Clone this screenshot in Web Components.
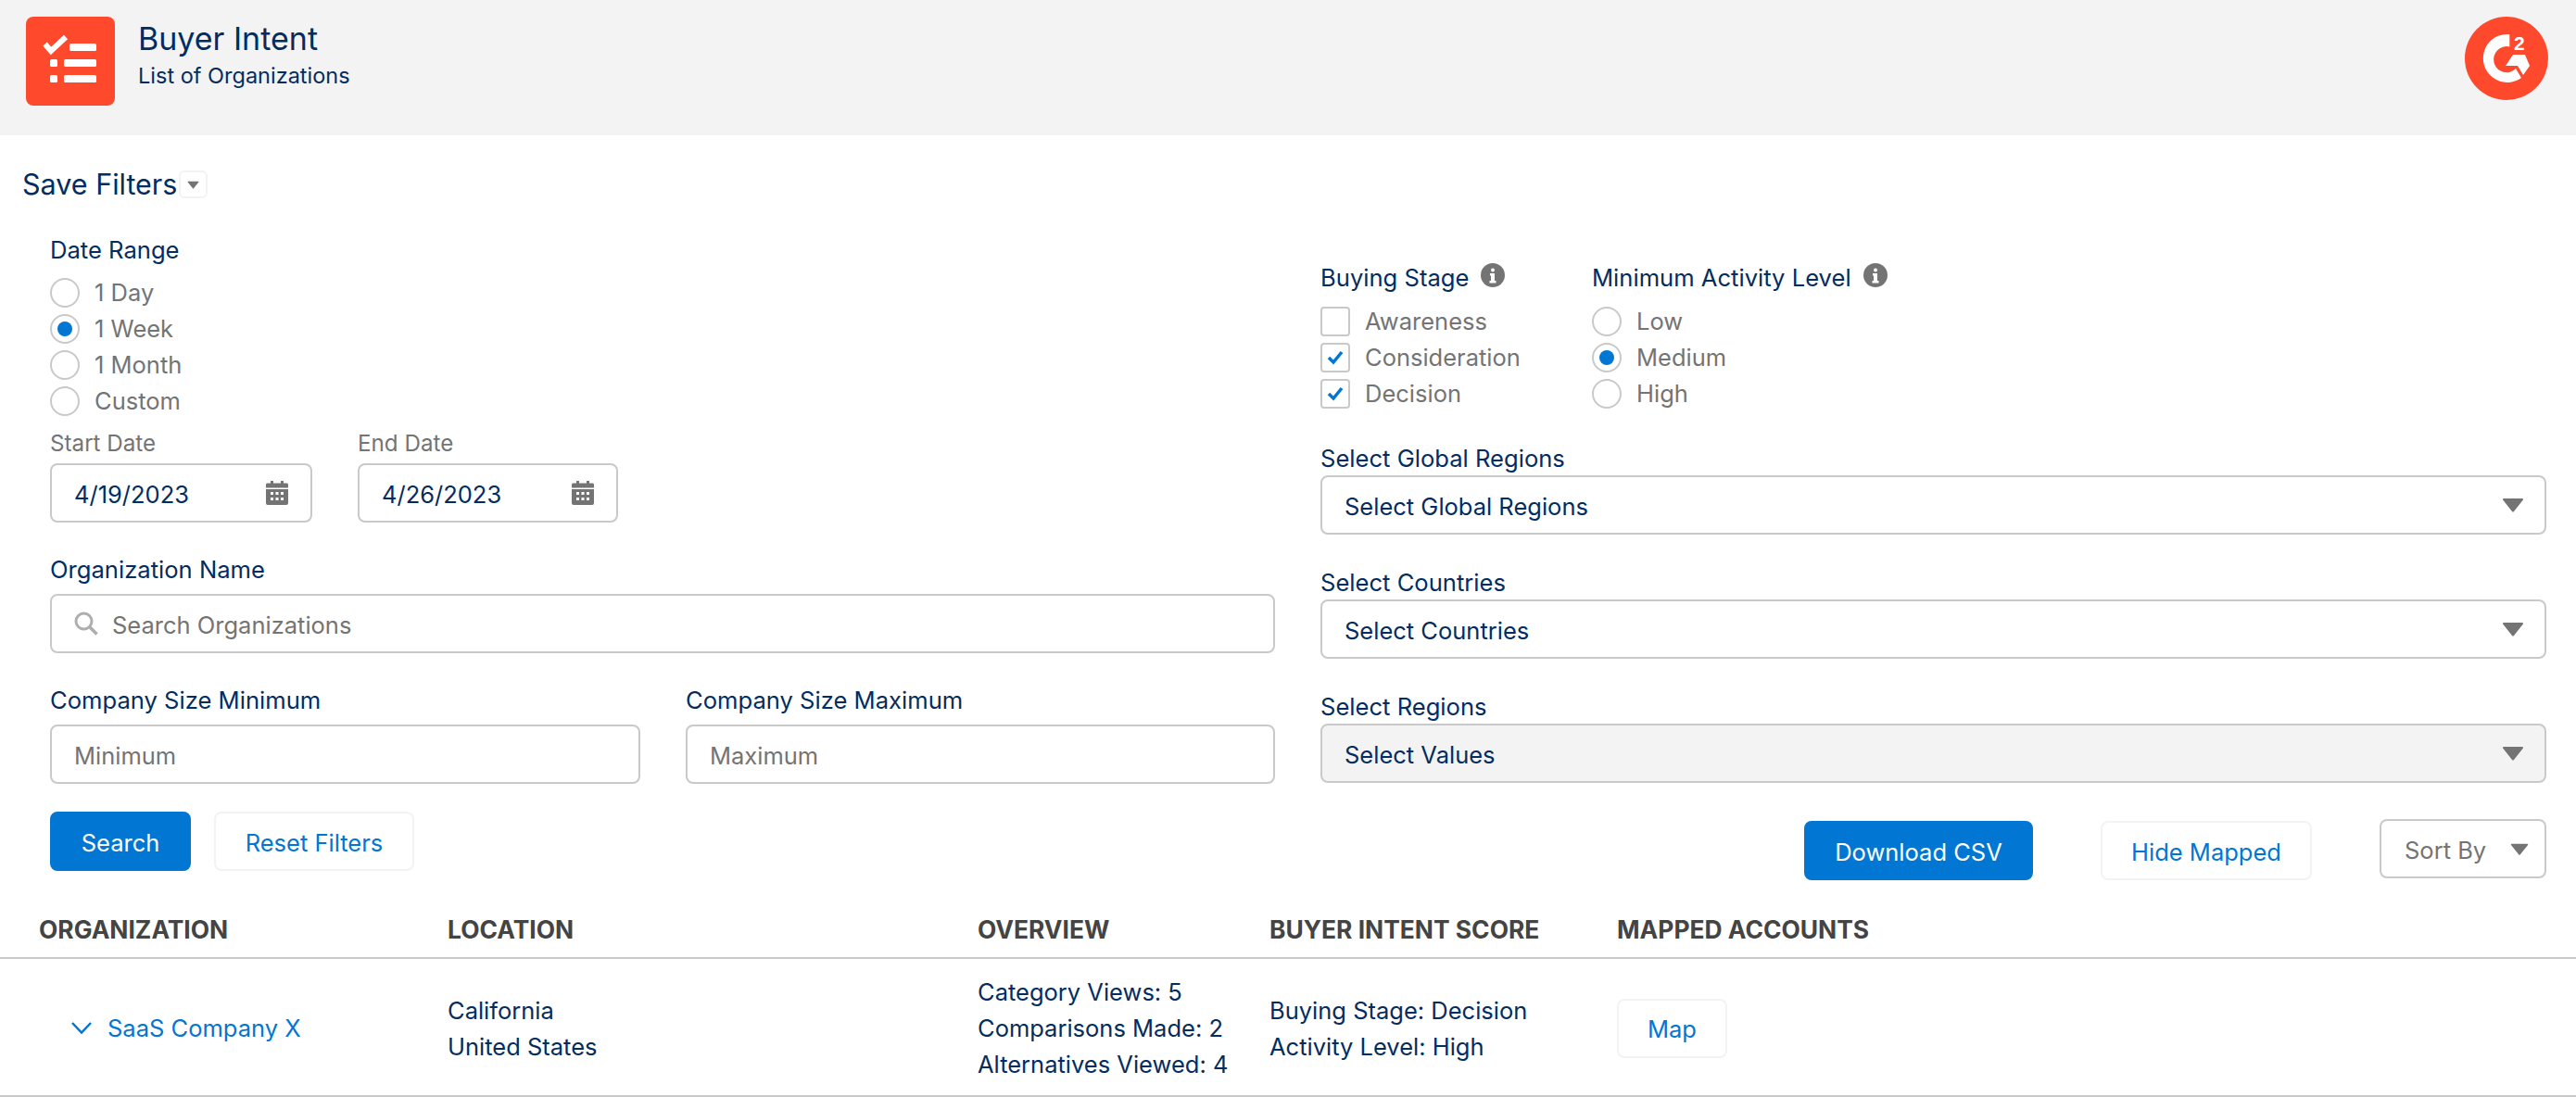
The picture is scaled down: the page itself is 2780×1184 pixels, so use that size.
<!DOCTYPE html>
<html lang="en">
<head>
<meta charset="utf-8">
<title>Buyer Intent</title>
<style>
  html, body { margin: 0; padding: 0; background: #fff; }
  body { font-family: Inter, "Liberation Sans", sans-serif; font-size: 25.5px; color: #032d60; }
</style>
</head>
<body>
<buyer-intent-page></buyer-intent-page>

<script>
const NAVY = "#032d60";
const GREY = "#747474";
const BLUE = "#0176d3";
const LINE = "#c9c9c9";

const ICONS = {
  list: `<svg width="96" height="96" viewBox="0 0 96 96"><rect width="96" height="96" rx="8" fill="#ff492c"/><polyline points="20.5,29.5 27,37 43,22" fill="none" stroke="#fff" stroke-width="6"/><g fill="#fff"><rect x="47" y="29" width="29" height="8" rx="1.5"/><rect x="41" y="46" width="35" height="8" rx="1.5"/><rect x="41" y="63" width="35" height="8" rx="1.5"/><rect x="26" y="46" width="8" height="8" rx="1.5"/><rect x="26" y="63" width="8" height="8" rx="1.5"/></g></svg>`,
  g2: `<svg width="90" height="90" viewBox="0 0 90 90"><circle cx="45" cy="45" r="45" fill="#ff492c"/><g fill="#fff"><path d="M48.3 19 A26 26 0 1 0 61 66 L55 56 A14 14 0 1 1 48.3 32.5 Z"/><polygon points="44,53 52,41 65,41 70,53 63,63 57,53"/><text x="53" y="36" font-family="Liberation Sans, sans-serif" font-weight="700" font-size="21">2</text></g></svg>`,
  calendar: `<svg width="24" height="26" viewBox="0 0 24 26"><g fill="#747474"><rect x="5" y="0" width="3" height="4"/><rect x="16" y="0" width="3" height="4"/><path d="M1.5 2.5h21a1.5 1.5 0 0 1 1.5 1.5v3.5H0V4a1.5 1.5 0 0 1 1.5-1.5z"/><path fill-rule="evenodd" d="M0 9h24v15a2 2 0 0 1-2 2H2a2 2 0 0 1-2-2zM5 12v3h3v-3zM10.500 12v3h3v-3zM16 12v3h3v-3zM5 18v3h3v-3zM10.500 18v3h3v-3zM16 18v3h3v-3z"/></g></svg>`,
  search: `<svg width="26" height="26" viewBox="0 0 26 26" fill="none" stroke="#aeaeae" stroke-width="3"><circle cx="10.500" cy="10.500" r="8.500"/><path d="M17 17 L24.500 24.500" stroke-width="3.500"/></svg>`,
  info: `<svg width="26" height="26" viewBox="0 0 26 26"><circle cx="13" cy="13" r="13" fill="#747474"/><g fill="#fff"><circle cx="13" cy="7.500" r="2"/><path d="M10 11h5v8h1.500v2.500h-7V19H11v-5.500h-1z"/></g></svg>`,
  check: `<svg width="18" height="16" viewBox="0 0 18 16" fill="none" stroke="#0176d3" stroke-width="3.500"><polyline points="2,8 7,13 16,2"/></svg>`,
  chevron: `<svg width="22" height="13" viewBox="0 0 22 13" fill="none" stroke="#0176d3" stroke-width="2.500"><polyline points="1,1 11,11.500 21,1"/></svg>`,
};

function caret(w, h) {
  return `<svg width="${w}" height="${h}" viewBox="0 0 24 16"><path d="M2 1h20a1 1 0 0 1 .9 1.500L13 15a1.300 1.300 0 0 1-2 0L1.100 2.500A1 1 0 0 1 2 1z" fill="#747474"/></svg>`;
}

// base class: every element stamps its html once into an open shadow root
class ShadowEl extends HTMLElement {
  constructor() {
    super();
    this.attachShadow({ mode: "open" });
  }
  attr(name, fallback = "") {
    return this.getAttribute(name) ?? fallback;
  }
  connectedCallback() {
    this.shadowRoot.innerHTML = `<style>${this.styles()}</style>${this.markup()}`;
  }
}

class AppHeader extends ShadowEl {
  styles() {
    return `
      :host { display: flex; align-items: flex-start; height: 146px; background: #f3f3f3; padding: 18px 30px 0 28px; box-sizing: border-box; }
      .titles { margin-left: 25px; flex: 1; display: flex; flex-direction: column; }
      .title { font-size: 34px; line-height: 48px; color: ${NAVY}; }
      .sub { font-size: 23.500px; line-height: 32px; color: ${NAVY}; }
      svg { display: block; }
    `;
  }
  markup() {
    return `${ICONS.list}<div class="titles"><div class="title"><slot name="title"></slot></div><div class="sub"><slot name="sub"></slot></div></div>${ICONS.g2}`;
  }
}

class SaveFilters extends ShadowEl {
  styles() {
    return `
      :host { display: flex; align-items: center; height: 104px; padding: 0 0 0 24px; box-sizing: border-box; }
      .text { font-size: 30.500px; color: ${NAVY}; }
      .btn { width: 31px; height: 30px; margin: 2px 0 0 2px; box-sizing: border-box; border: 2px solid #f3f3f3; border-radius: 6px; display: flex; align-items: center; justify-content: center; }
    `;
  }
  markup() {
    return `<span class="text"><slot></slot></span><span class="btn">${caret(13, 9)}</span>`;
  }
}

class FieldLabel extends ShadowEl {
  styles() {
    return `
      :host { display: flex; align-items: center; height: 38px; font-size: 25.600px; color: ${NAVY}; }
      :host([muted]) { height: 30px; font-size: 24.200px; color: ${GREY}; }
      .info { display: flex; margin-left: 13px; margin-top: -4px; }
    `;
  }
  markup() {
    return `<slot></slot>${this.hasAttribute("info") ? `<span class="info">${ICONS.info}</span>` : ""}`;
  }
}

class OptionRow extends ShadowEl {
  styles() {
    return `
      :host { display: flex; align-items: center; height: 39px; font-size: 25.500px; color: ${GREY}; }
      .mark { width: 32px; height: 32px; box-sizing: border-box; border: 2px solid ${LINE}; background: #fff; display: flex; align-items: center; justify-content: center; margin-right: 16px; flex: none; }
      .radio { border-radius: 50%; }
      .box { border-radius: 4px; }
      .dot { width: 16px; height: 16px; border-radius: 50%; background: ${BLUE}; }
    `;
  }
  markup() {
    const on = this.hasAttribute("checked");
    const isBox = this.attr("type", "radio") === "checkbox";
    const inner = !on ? "" : isBox ? ICONS.check : `<span class="dot"></span>`;
    return `<span class="mark ${isBox ? "box" : "radio"}">${inner}</span><slot></slot>`;
  }
}

class InputBox extends ShadowEl {
  styles() {
    return `
      :host { display: flex; align-items: center; height: 64px; box-sizing: border-box; border: 2px solid ${LINE}; border-radius: 8px; padding: 0 24px; background: #fff; font-size: 25.500px; color: ${GREY}; }
      :host([value]) { color: ${NAVY}; }
      .lead { display: flex; margin-right: 15px; }
      .text { flex: 1; padding-top: 2px; }
      .trail { display: flex; }
    `;
  }
  markup() {
    const lead = this.hasAttribute("search") ? `<span class="lead">${ICONS.search}</span>` : "";
    const trail = this.hasAttribute("date") ? `<span class="trail">${ICONS.calendar}</span>` : "";
    return `${lead}<span class="text"><slot></slot></span>${trail}`;
  }
}

class SelectBox extends ShadowEl {
  styles() {
    return `
      :host { display: flex; align-items: center; justify-content: space-between; height: 64px; box-sizing: border-box; border: 2px solid ${LINE}; border-radius: 8px; padding: 0 22px 0 24px; background: #fff; font-size: 25.500px; color: ${NAVY}; }
      :host([disabled]) { background: #f3f3f3; }
      :host([compact]) { padding: 0 17px 0 25px; color: ${GREY}; width: 180px; }
      .text { padding-top: 2px; }
      svg { display: block; }
    `;
  }
  markup() {
    return `<span class="text"><slot></slot></span>${this.hasAttribute("compact") ? caret(20, 15) : caret(24, 16)}`;
  }
}

class ActionButton extends ShadowEl {
  styles() {
    return `
      :host { display: inline-flex; align-items: center; justify-content: center; height: 64px; box-sizing: border-box; border-radius: 8px; border: 2px solid #f3f3f3; background: #fff; color: ${BLUE}; font-size: 25.500px; padding-top: 2px; }
      :host([primary]) { background: ${BLUE}; border-color: ${BLUE}; color: #fff; }
    `;
  }
  markup() {
    return `<slot></slot>`;
  }
}

class ResultTable extends ShadowEl {
  styles() {
    return `
      :host { display: block; margin-top: 30px; }
      .grid { display: grid; grid-template-columns: 441px 572px 315px 375px 1fr; padding-left: 42px; }
      .head { height: 45px; padding-bottom: 8px; border-bottom: 2px solid ${LINE}; font-weight: 700; font-size: 26.400px; color: #444; align-items: center; }
      .row { height: 145px; padding-top: 2px; border-bottom: 2px solid ${LINE}; align-items: center; font-size: 25.500px; line-height: 39px; color: ${NAVY}; }
      .org { display: flex; align-items: center; gap: 17px; padding-left: 35px; color: ${BLUE}; }
    `;
  }
  markup() {
    return `
      <div class="grid head"><div>ORGANIZATION</div><div>LOCATION</div><div>OVERVIEW</div><div>BUYER INTENT SCORE</div><div>MAPPED ACCOUNTS</div></div>
      <div class="grid row">
        <div class="org">${ICONS.chevron}<span>SaaS Company X</span></div>
        <div>California<br>United States</div>
        <div>Category Views: 5<br>Comparisons Made: 2<br>Alternatives Viewed: 4</div>
        <div>Buying Stage: Decision<br>Activity Level: High</div>
        <div><action-button style="width:119px">Map</action-button></div>
      </div>`;
  }
}

class BuyerIntentPage extends ShadowEl {
  styles() {
    return `
      :host { display: block; width: 2780px; height: 1184px; overflow: hidden; }
      .filters { display: grid; grid-template-columns: 1322px 1323px; column-gap: 49px; padding-left: 54px; }
      .stack { display: flex; flex-direction: column; }
      .pair { display: grid; column-gap: 49px; }
      .dates { grid-template-columns: 283px 281px; margin-top: 11px; }
      .sizes { grid-template-columns: 637px 636px; margin-top: 31px; }
      .group { margin-top: 8px; }
      .org { margin-top: 31px; }
      .gap8 { margin-top: 8px; }
      .gap7 { margin-top: 7px; }
      .buttons { display: flex; gap: 25px; margin-top: 30px; }
      .right { padding-top: 30px; }
      .stage { display: flex; height: 164px; }
      .stage > div:first-child { width: 293px; }
      .opts { margin-top: 9px; }
      .field { margin-top: 32px; }
      .field.first { margin-top: 31px; }
      .actions { display: flex; justify-content: flex-end; align-items: flex-start; gap: 73px; margin-top: 39px; }
      .actions action-button { margin-top: 2px; }
    `;
  }
  markup() {
    return `
      <app-header>
        <span slot="title">Buyer Intent</span>
        <span slot="sub">List of Organizations</span>
      </app-header>
      <save-filters>Save Filters</save-filters>
      <div class="filters">
        <div class="stack">
          <field-label>Date Range</field-label>
          <div class="group">
            <option-row>1 Day</option-row>
            <option-row checked>1 Week</option-row>
            <option-row>1 Month</option-row>
            <option-row>Custom</option-row>
          </div>
          <div class="pair dates">
            <div class="stack"><field-label muted>Start Date</field-label><input-box class="gap7" date value>4/19/2023</input-box></div>
            <div class="stack"><field-label muted>End Date</field-label><input-box class="gap7" date value>4/26/2023</input-box></div>
          </div>
          <div class="stack org"><field-label>Organization Name</field-label><input-box class="gap8" search>Search Organizations</input-box></div>
          <div class="pair sizes">
            <div class="stack"><field-label>Company Size Minimum</field-label><input-box class="gap8">Minimum</input-box></div>
            <div class="stack"><field-label>Company Size Maximum</field-label><input-box class="gap8">Maximum</input-box></div>
          </div>
          <div class="buttons">
            <action-button primary style="width:152px">Search</action-button>
            <action-button style="width:216px">Reset Filters</action-button>
          </div>
        </div>
        <div class="stack right">
          <div class="stage">
            <div>
              <field-label info>Buying Stage</field-label>
              <div class="opts">
                <option-row type="checkbox">Awareness</option-row>
                <option-row type="checkbox" checked>Consideration</option-row>
                <option-row type="checkbox" checked>Decision</option-row>
              </div>
            </div>
            <div>
              <field-label info>Minimum Activity Level</field-label>
              <div class="opts">
                <option-row>Low</option-row>
                <option-row checked>Medium</option-row>
                <option-row>High</option-row>
              </div>
            </div>
          </div>
          <div class="stack field first"><field-label>Select Global Regions</field-label><select-box>Select Global Regions</select-box></div>
          <div class="stack field"><field-label>Select Countries</field-label><select-box>Select Countries</select-box></div>
          <div class="stack field"><field-label>Select Regions</field-label><select-box disabled>Select Values</select-box></div>
          <div class="actions">
            <action-button primary style="width:247px">Download CSV</action-button>
            <action-button style="width:228px">Hide Mapped</action-button>
            <select-box compact>Sort By</select-box>
          </div>
        </div>
      </div>
      <result-table></result-table>`;
  }
}

customElements.define("app-header", AppHeader);
customElements.define("save-filters", SaveFilters);
customElements.define("field-label", FieldLabel);
customElements.define("option-row", OptionRow);
customElements.define("input-box", InputBox);
customElements.define("select-box", SelectBox);
customElements.define("action-button", ActionButton);
customElements.define("result-table", ResultTable);
customElements.define("buyer-intent-page", BuyerIntentPage);
</script>
</body>
</html>
